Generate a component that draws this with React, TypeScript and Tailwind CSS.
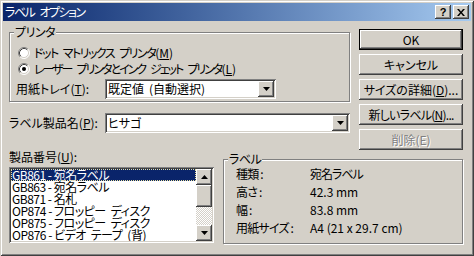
import React from "react";

const raised =
  "shadow-[inset_-1px_-1px_#404040,inset_1px_1px_#ffffff,inset_-2px_-2px_#808080,inset_2px_2px_#d4d0c8]";
const sunken =
  "shadow-[inset_1px_1px_#808080,inset_-1px_-1px_#ffffff,inset_2px_2px_#404040,inset_-2px_-2px_#d4d0c8]";

function Sp() {
  return <span className="inline-block w-[5px]"> </span>;
}

function Radio({ checked }: { checked?: boolean }) {
  return (
    <svg width="12" height="12" viewBox="0 0 12 12" className="shrink-0">
      <circle cx="6" cy="6" r="5" fill="#ffffff" />
      <path d="M2.11 9.89 A5.5 5.5 0 0 1 9.89 2.11" stroke="#808080" strokeWidth="1" fill="none" />
      <path d="M9.89 2.11 A5.5 5.5 0 0 1 2.11 9.89" stroke="#ffffff" strokeWidth="1" fill="none" />
      <path d="M2.82 9.18 A4.5 4.5 0 0 1 9.18 2.82" stroke="#404040" strokeWidth="1" fill="none" />
      <path d="M9.18 2.82 A4.5 4.5 0 0 1 2.82 9.18" stroke="#d4d0c8" strokeWidth="1" fill="none" />
      {checked && <circle cx="6" cy="6" r="2" fill="#000000" />}
    </svg>
  );
}

function Arrow({ dir }: { dir: "up" | "down" }) {
  return (
    <svg width="7" height="4" viewBox="0 0 7 4">
      {dir === "down" ? (
        <polygon points="0,0 7,0 3.5,4" fill="#000000" />
      ) : (
        <polygon points="0,4 7,4 3.5,0" fill="#000000" />
      )}
    </svg>
  );
}

function Combo({ children, className }: { children: React.ReactNode; className: string }) {
  return (
    <div className={`h-[20px] bg-white flex items-stretch p-[2px] ${sunken} ${className}`}>
      <div className="flex-1 flex items-center pl-[1px] leading-[12px] whitespace-nowrap overflow-hidden">{children}</div>
      <div className={`w-[16px] flex items-center justify-center bg-[#d4d0c8] ${raised}`}>
        <Arrow dir="down" />
      </div>
    </div>
  );
}

function Btn({ children, def, disabled }: { children: React.ReactNode; def?: boolean; disabled?: boolean }) {
  return (
    <div
      className={`h-[21px] w-[104px] flex items-center justify-center leading-[12px] whitespace-nowrap ${raised} ${
        def ? "border border-black" : ""
      } ${disabled ? "text-[#808080] [text-shadow:1px_1px_0_#ffffff]" : "text-black"}`}
    >
      {children}
    </div>
  );
}

function Group({ label, className, children }: { label: string; className: string; children: React.ReactNode }) {
  return (
    <div className={`relative border border-[#808080] shadow-[inset_1px_1px_#ffffff,1px_1px_#ffffff] ${className}`}>
      <div className="absolute -top-[7px] left-[4px] px-[1px] bg-[#d4d0c8] leading-[12px] tracking-[-0.5px]">{label}</div>
      {children}
    </div>
  );
}

const items: React.ReactNode[] = [
  <>GB861 - 宛名ラベル</>,
  <>GB863 - 宛名ラベル</>,
  <>GB871 - 名札</>,
  <>
    OP874 - フロッピー<Sp />ディスク
  </>,
  <>
    OP875 - フロッピー<Sp />ディスク
  </>,
  <>
    OP876 - ビデオ<Sp />テープ<Sp />(背)
  </>,
];

export default function App() {
  return (
    <div
      className={`w-[474px] h-[256px] bg-[#d4d0c8] p-[3px] flex flex-col text-[12px] text-black font-['Noto_Sans_CJK_JP','Noto_Sans_CJK_SC',sans-serif] [font-feature-settings:'palt'] shadow-[inset_1px_1px_#d4d0c8,inset_-1px_-1px_#404040,inset_2px_2px_#ffffff,inset_-2px_-2px_#808080] overflow-hidden`}
    >
      {/* Title bar */}
      <div className="h-[18px] flex items-center bg-linear-to-r from-[#0a246a] to-[#a6caf0] pl-[2px] pr-[2px]">
        <div className="flex-1 text-white leading-[12px] whitespace-nowrap tracking-[-1.5px]">
          ラベル<Sp />オプション
        </div>
        <div className="flex gap-[2px]">
          <div className={`w-[16px] h-[14px] bg-[#d4d0c8] flex items-center justify-center ${raised}`}>
            <span className="font-['Liberation_Sans',sans-serif] font-bold text-[11px] leading-[11px]">?</span>
          </div>
          <div className={`w-[16px] h-[14px] bg-[#d4d0c8] flex items-center justify-center ${raised}`}>
            <svg width="8" height="7" viewBox="0 0 8 7">
              <path d="M0 0 L2 0 L4 2.5 L6 0 L8 0 L5 3.5 L8 7 L6 7 L4 4.5 L2 7 L0 7 L3 3.5 Z" fill="#000000" />
            </svg>
          </div>
        </div>
      </div>

      {/* Body */}
      <div className="pl-[6px] w-[460px] flex flex-col">
        <div className="flex gap-[9px] mt-[5px] items-start">
          {/* Left column */}
          <div className="w-[341px] flex flex-col">
            <Group label="プリンタ" className="mt-[6px] pt-[12px] pb-[2px]">
              <div className="h-[16px] flex items-center pl-[8px] gap-[4px] whitespace-nowrap">
                <Radio />
                <span className="leading-[12px] tracking-[-1.5px]">
                  ドット<Sp />マトリックス<Sp />プリンタ
                  <span className="tracking-normal">
                    (<u>M</u>)
                  </span>
                </span>
              </div>
              <div className="h-[16px] flex items-center pl-[8px] gap-[4px] whitespace-nowrap">
                <Radio checked />
                <span className="leading-[12px] tracking-[-2px]">
                  レーザー<Sp />プリンタとインク<Sp />ジェット<Sp />プリンタ
                  <span className="tracking-normal">
                    (<u>L</u>)
                  </span>
                </span>
              </div>
              <div className="mt-[2px] flex items-center pl-[6px]">
                <div className="w-[89px] leading-[12px] whitespace-nowrap">
                  用紙トレイ(<u>T</u>):
                </div>
                <Combo className="w-[171px]">
                  既定値<Sp />(自動選択)
                </Combo>
              </div>
            </Group>
            <div className="mt-[11px] flex items-center">
              <div className="w-[96px] leading-[12px] whitespace-nowrap">
                ラベル製品名(<u>P</u>):
              </div>
              <Combo className="flex-1">ヒサゴ</Combo>
            </div>
          </div>

          {/* Right column buttons */}
          <div className="w-[104px] mt-[3px] flex flex-col gap-[4px]">
            <Btn def>OK</Btn>
            <Btn>キャンセル</Btn>
            <Btn>
              サイズの詳細(<u>D</u>)...
            </Btn>
            <Btn>
              <span className="tracking-[-0.75px]">
                新しいラベル(<u>N</u>)...
              </span>
            </Btn>
            <Btn disabled>削除(E)</Btn>
          </div>
        </div>

        {/* Bottom section */}
        <div className="flex gap-[9px] items-start">
          <div className="w-[205px] flex flex-col">
            <div className="mt-[1px] h-[12px] leading-[12px] whitespace-nowrap">
              製品番号(<u>U</u>):
            </div>
            <div className={`mt-[4px] h-[76px] bg-white p-[2px] flex ${sunken}`}>
              <div className="flex-1 flex flex-col overflow-hidden">
                {items.map((it, i) => (
                  <div
                    key={i}
                    className={`h-[12px] leading-[12px] pl-[1px] whitespace-nowrap tracking-[-0.5px] ${
                      i === 0
                        ? "bg-[#0a246a] text-white outline outline-1 outline-dotted outline-[#e8e0a0] -outline-offset-1"
                        : ""
                    }`}
                  >
                    {it}
                  </div>
                ))}
              </div>
              <div className="w-[16px] flex flex-col">
                <div className={`h-[16px] bg-[#d4d0c8] flex items-center justify-center ${raised}`}>
                  <Arrow dir="up" />
                </div>
                <div className={`h-[22px] bg-[#d4d0c8] ${raised}`} />
                <div className="flex-1 bg-[image:repeating-conic-gradient(#ffffff_0_25%,#d4d0c8_0_50%)] bg-[length:2px_2px]" />
                <div className={`h-[16px] bg-[#d4d0c8] flex items-center justify-center ${raised}`}>
                  <Arrow dir="down" />
                </div>
              </div>
            </div>
          </div>

          <Group label="ラベル" className="w-[240px] mt-[9px] h-[85px] pt-[5px]">
            {[
              ["種類 :", "宛名ラベル"],
              ["高さ :", "42.3 mm"],
              ["幅 :", "83.8 mm"],
              ["用紙サイズ :", "A4 (21 x 29.7 cm)"],
            ].map(([k, v]) => (
              <div key={k} className="h-[18px] flex items-center pl-[12px] whitespace-nowrap">
                <div className="w-[74px] leading-[12px] tracking-[-0.8px]">{k}</div>
                <div className={`leading-[12px] ${k === "種類 :" ? "tracking-[-1px]" : ""}`}>{v}</div>
              </div>
            ))}
          </Group>
        </div>
      </div>
    </div>
  );
}
